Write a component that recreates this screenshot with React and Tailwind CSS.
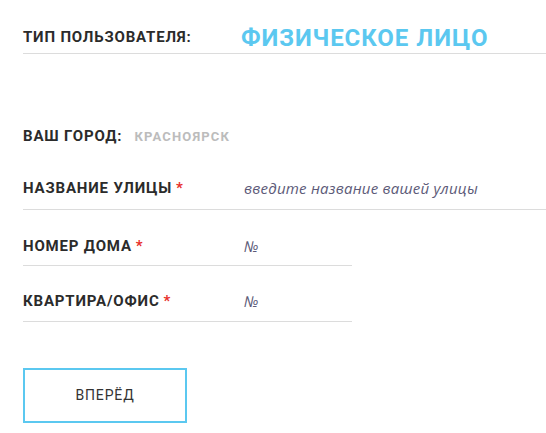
import React from "react";

export default function App() {
  const label = "font-bold text-[15px] text-[#2b2b2b] uppercase tracking-[0.055em] leading-none";
  const star = <span className="text-[#e8302a] ml-[4px] tracking-normal">*</span>;
  const ph = "italic text-[15px] text-[#5c5a78] leading-none tracking-[0.015em]";
  return (
    <div className="w-[546px] h-[433px] bg-white pl-[23px] pt-[22px]" style={{ fontFamily: "Roboto, 'Noto Sans', sans-serif" }}>
      <div className="flex items-center h-[32px] border-b border-[#dcdcdc]">
        <div className={`${label} w-[218px]`}>Тип пользователя:</div>
        <div className="font-bold text-[24px] text-[#5bc8f0] leading-none tracking-[0.04em]">ФИЗИЧЕСКОЕ ЛИЦО</div>
      </div>
      <div className="flex items-center h-[30px] mt-[67px]">
        <div className={label}>Ваш город:</div>
        <div className="ml-[12px] font-bold text-[13px] text-[#bcbcbc] leading-none tracking-[0.09em]">КРАСНОЯРСК</div>
      </div>
      <div className="flex items-center h-[36px] pb-[6px] mt-[23px] border-b border-[#dcdcdc]">
        <div className={`${label} w-[221px]`}>Название улицы{star}</div>
        <div className={ph} style={{ fontFamily: "'Open Sans', sans-serif" }}>введите название вашей улицы</div>
      </div>
      <div className="flex items-center h-[34px] pb-[4px] mt-[22px] w-[329px] border-b border-[#dcdcdc]">
        <div className={`${label} w-[221px]`}>Номер дома{star}</div>
        <div className={ph} style={{ fontFamily: "'Open Sans', sans-serif" }}>№</div>
      </div>
      <div className="flex items-center h-[35px] pb-[5px] mt-[21px] w-[329px] border-b border-[#dcdcdc]">
        <div className={`${label} w-[221px]`}>Квартира/офис{star}</div>
        <div className={ph} style={{ fontFamily: "'Open Sans', sans-serif" }}>№</div>
      </div>
      <button className="mt-[46px] w-[164px] h-[55px] border-2 border-[#5bc8f0] flex items-center justify-center text-[14px] text-[#333] tracking-[0.06em] bg-white">
        ВПЕРЁД
      </button>
    </div>
  );
}
